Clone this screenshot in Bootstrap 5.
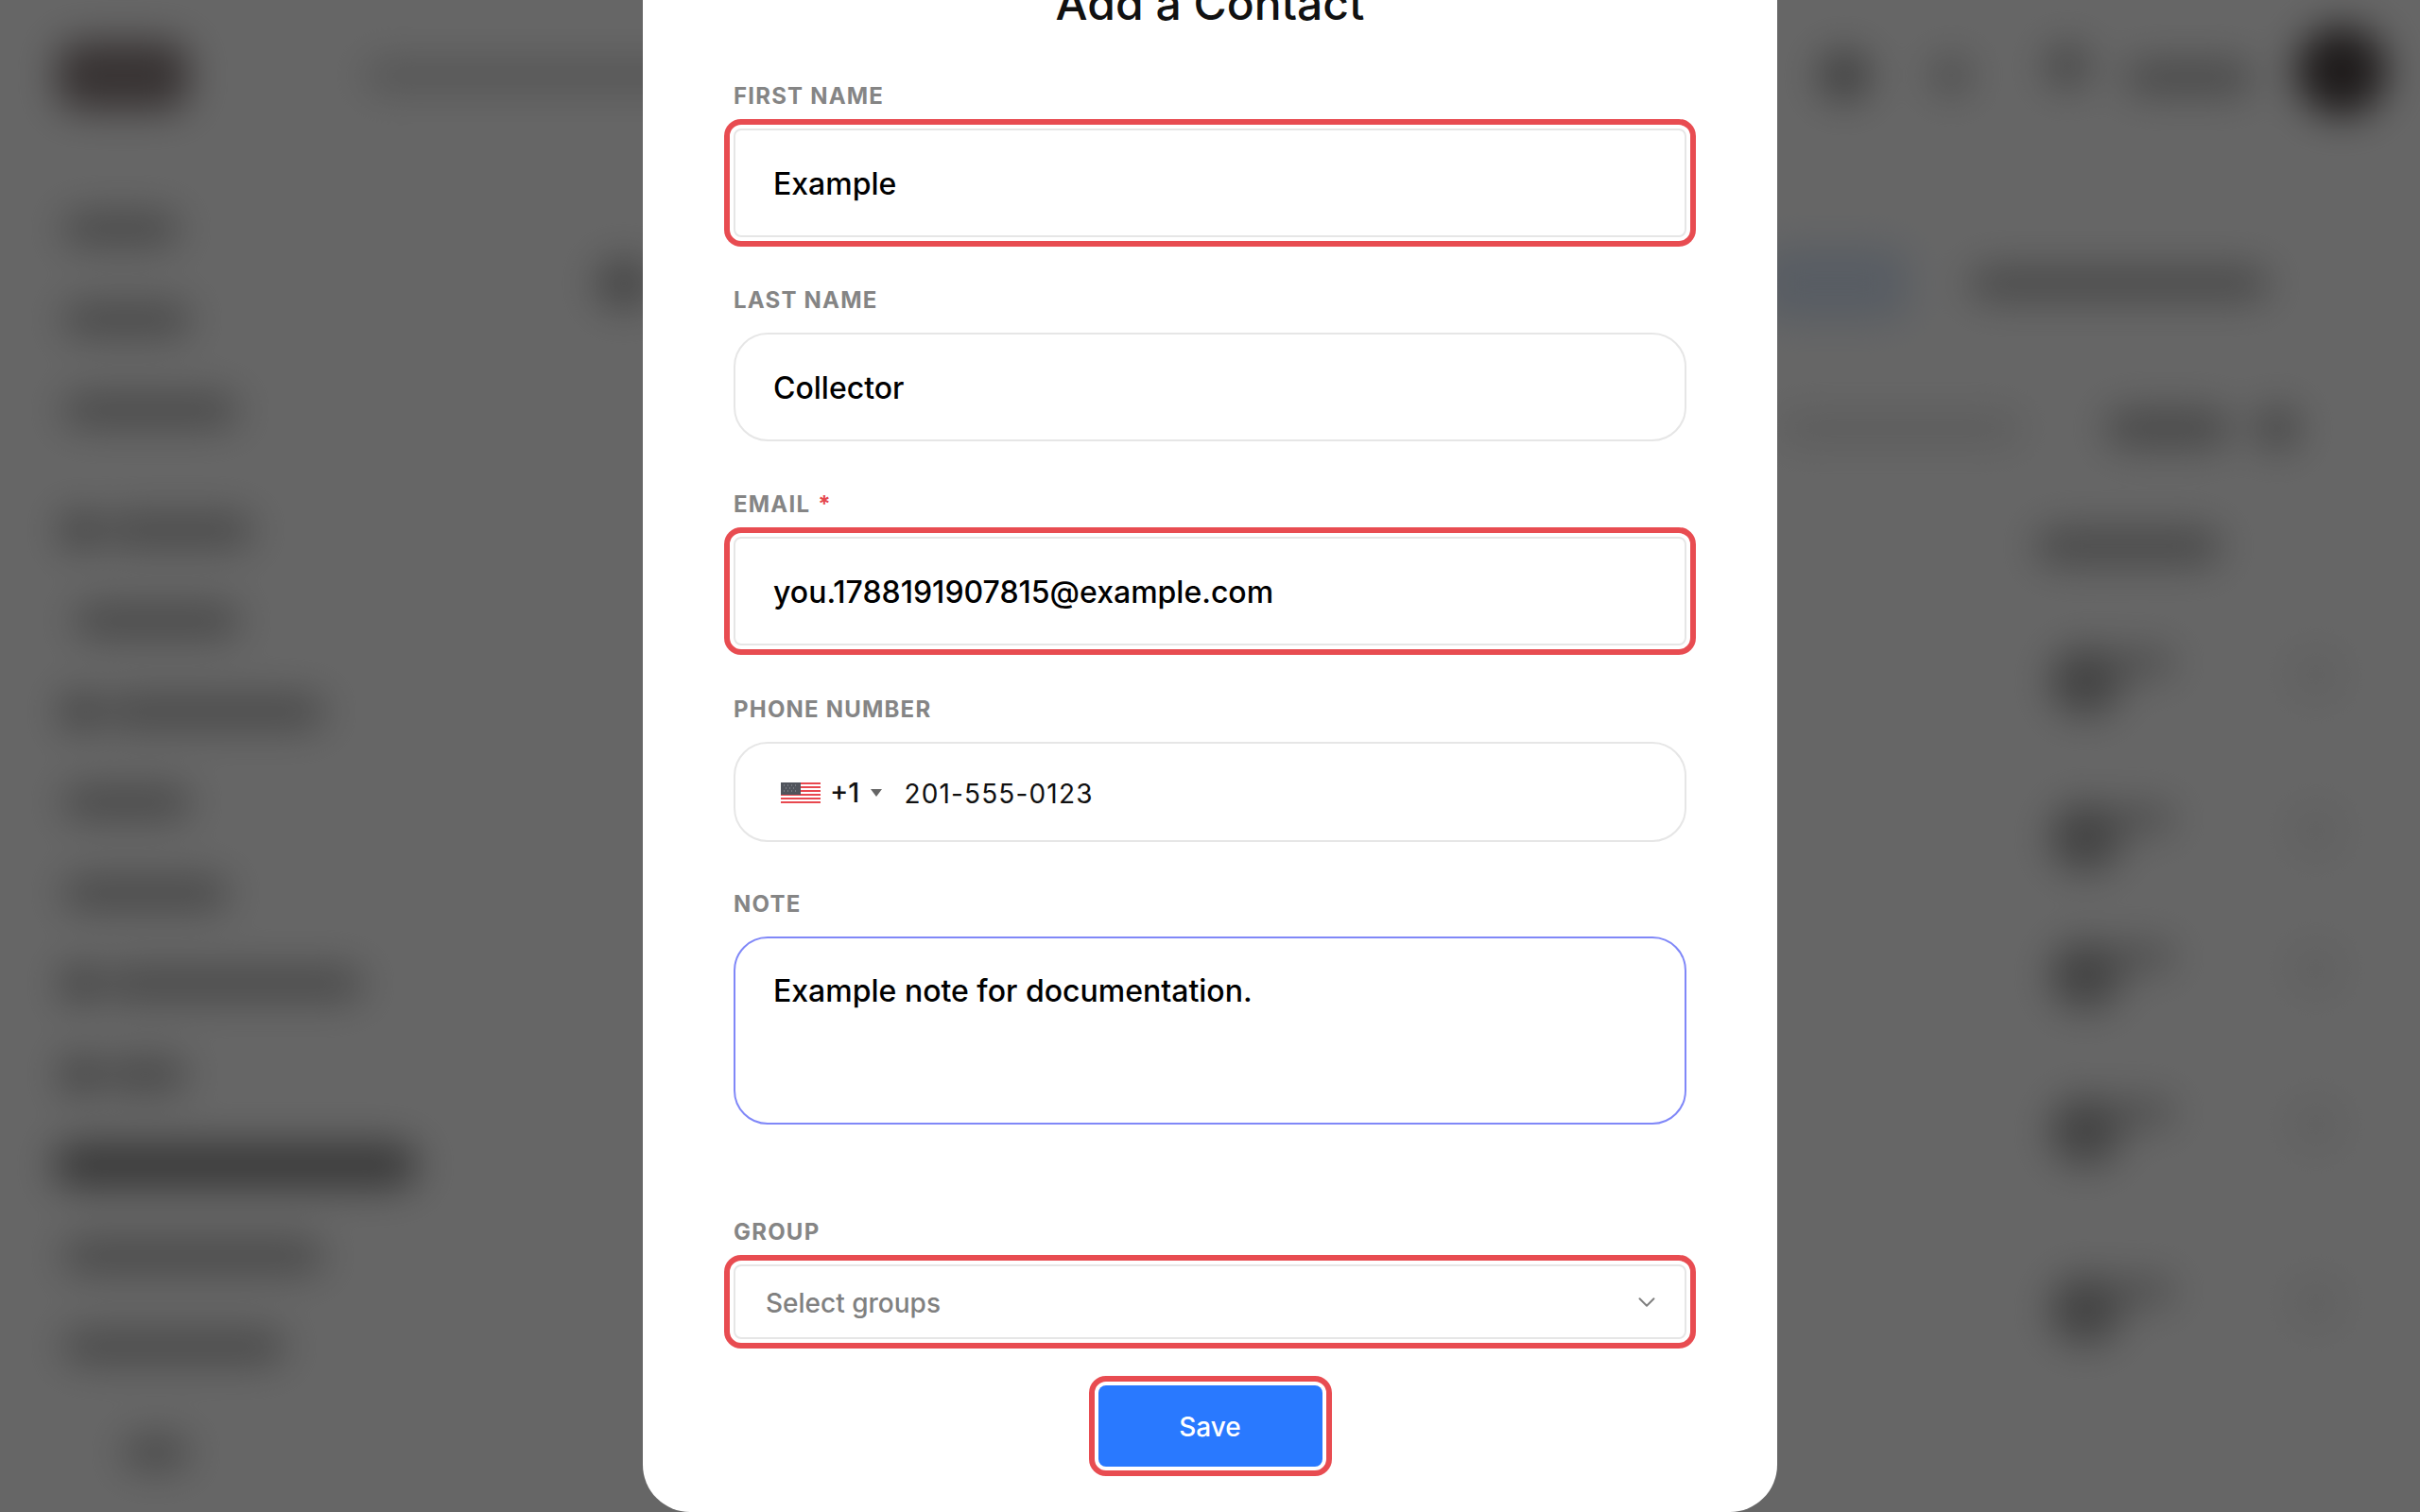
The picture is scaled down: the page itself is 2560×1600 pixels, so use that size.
<!DOCTYPE html>
<html lang="en">
<head>
<meta charset="utf-8">
<title>Add a Contact</title>
<link rel="stylesheet" href="https://cdn.jsdelivr.net/npm/bootstrap@5.3.0/dist/css/bootstrap.min.css">
<style>
html,body{height:1600px;overflow:hidden;background:#fff;font-family:"Inter","Liberation Sans",sans-serif}
.under-page{width:2560px;height:1600px;filter:blur(20px);overflow:hidden}
.blob{background:#b8b8b8;border-radius:40px;height:36px;flex:none}
.ico-blob{width:36px;height:36px;background:#a0a0a0;border-radius:8px;flex:none;margin-right:8px}
.top-strip{height:160px;padding:0 42px 0 60px}
.logo-blob{width:140px;height:74px;background:#8c8080;border-radius:24px;margin-right:186px}
.search-blob{width:1000px;height:32px;background:#d2d2d2}
.top-right{margin-left:auto;width:594px}
.rnd{border-radius:50%;flex:none}
.side-col{width:540px;padding-left:66px;height:1440px;padding-top:34px}
.side-row{height:96px;flex:none}
.row-gap{margin-top:31px}
.active-row{background:#8e8e8e;height:48px;width:386px;margin-left:-10px}
.main-col{flex:1}
.drop-row{margin-left:1628px;height:70px}
.drop-c{width:76px;height:74px;background:#a8a8a8}
.drop-arm{width:68px;height:30px;background:#c4c4c4;margin:2px 0 0 -12px;border-radius:14px;flex:none}
.drop-far{width:60px;height:60px;background:#f2f2f2;margin-left:120px}
.overlay-layer{position:fixed;inset:0;background:rgba(0,0,0,.6);overflow:hidden}
.dialog-sheet{width:1200px;background:#fff;border-radius:0 0 50px 50px;padding:0 96px 48px;flex:none}
.sheet-title{font-size:48px;font-weight:500;line-height:60px;color:#111;text-align:center;margin:0 0 53px}
.fld-label{display:block;font-size:24px;font-weight:700;letter-spacing:1.2px;line-height:30px;color:#858585;text-transform:uppercase;margin:0 0 19px}
.fld-label i{font-style:normal;color:#e5484d;margin-left:8px}
.fld-block{margin-bottom:53px}
.fld-block.fld-wide{margin-bottom:54px}
.fld-block.fld-tight{margin-bottom:52px}
.form-control.fld-input{height:115px;margin-bottom:-1px;border:2px solid #e6e6e6;border-radius:36px;padding:2px 40px 0;font-size:32px;font-weight:500;color:#000;box-shadow:none;line-height:1.5}
.marked{outline:6px solid #e84c51;outline-offset:4px;border-radius:8px!important}
.phone-box{height:106px;margin-bottom:-1px;border:2px solid #e6e6e6;border-radius:36px;padding:3px 46px 0 48px}
.flag-svg{width:42px;height:24px;flex:none;margin-right:10px}
.dial{font-size:29px;font-weight:500;color:#111;line-height:1;margin-top:-2px}
.caret-tri{width:0;height:0;border-left:6px solid transparent;border-right:6px solid transparent;border-top:8px solid #666;margin:-2px 23px 0 12px}
.phone-num{font-size:28px;letter-spacing:1.15px;color:#111;line-height:1}
.form-control.note-input{height:199px;border:2px solid #8088f8;border-radius:36px;padding:32px 40px 0;font-size:32px;font-weight:500;color:#000;resize:none;box-shadow:none}
.form-select.grp-select{height:79px;border:2px solid #e6e6e6;padding:2px 32px 0;font-size:28px;font-weight:500;color:#808080;box-shadow:none;background-position:right 27px center;background-size:26px 20px;background-image:url("data:image/svg+xml,%3csvg xmlns='http://www.w3.org/2000/svg' viewBox='0 0 16 16'%3e%3cpath fill='none' stroke='%23808080' stroke-linecap='round' stroke-linejoin='round' stroke-width='1.6' d='m2 5 6 6 6-6'/%3e%3c/svg%3e")}
.btn.save-btn{width:237px;height:86px;background:#2979ff;border:0;font-size:28px;font-weight:500;color:#fff;padding:2px 0 0}
.save-wrap{margin-top:49px}
</style>
</head>
<body>
<div class="under-page" aria-hidden="true">
  <div class="top-strip d-flex align-items-center">
    <div class="logo-blob"></div>
    <div class="blob search-blob"></div>
    <div class="top-right d-flex align-items-center">
      <div class="rnd" style="width:54px;height:54px;background:#a0a0a0"></div>
      <div class="rnd" style="width:40px;height:40px;background:#bcbcbc;margin-left:66px"></div>
      <div class="rnd" style="width:48px;height:48px;background:#b4b4b4;margin-left:79px;margin-top:-20px"></div>
      <div class="blob" style="width:135px;height:36px;margin-left:37px;margin-top:4px"></div>
      <div class="rnd" style="width:96px;height:96px;background:#4e4646;margin-left:46px;margin-top:-10px"></div>
    </div>
  </div>
  <div class="d-flex">
    <div class="side-col d-flex flex-column">
      <div class="side-row d-flex align-items-center"><div class="blob" style="width:124px"></div></div>
      <div class="side-row d-flex align-items-center"><div class="blob" style="width:136px"></div></div>
      <div class="side-row d-flex align-items-center"><div class="blob" style="width:186px"></div></div>
      <div class="side-row d-flex align-items-center row-gap"><div class="ico-blob"></div><div class="blob" style="width:158px"></div></div>
      <div class="side-row d-flex align-items-center"><div class="blob" style="width:176px;margin-left:12px"></div></div>
      <div class="side-row d-flex align-items-center"><div class="ico-blob"></div><div class="blob" style="width:234px"></div></div>
      <div class="side-row d-flex align-items-center"><div class="blob" style="width:136px"></div></div>
      <div class="side-row d-flex align-items-center"><div class="blob" style="width:176px"></div></div>
      <div class="side-row d-flex align-items-center"><div class="ico-blob"></div><div class="blob" style="width:274px"></div></div>
      <div class="side-row d-flex align-items-center"><div class="ico-blob"></div><div class="blob" style="width:88px"></div></div>
      <div class="side-row d-flex align-items-center"><div class="blob active-row"></div></div>
      <div class="side-row d-flex align-items-center"><div class="blob" style="width:276px"></div></div>
      <div class="side-row d-flex align-items-center"><div class="blob" style="width:236px"></div></div>
      <div class="side-row d-flex align-items-center mt-3"><div class="blob" style="width:70px;margin-left:64px"></div></div>
    </div>
    <div class="main-col">
      <div class="d-flex align-items-center" style="height:100px;margin-top:90px;margin-left:90px">
        <div class="blob" style="width:60px;height:54px;background:#b0b0b0"></div>
        <div class="blob" style="width:160px;height:80px;background:#dce8f8;margin-left:1170px;border-radius:24px"></div>
        <div class="blob" style="width:316px;margin-left:64px"></div>
      </div>
      <div class="d-flex align-items-center" style="height:66px;margin-top:70px;margin-left:1340px">
        <div class="blob" style="width:260px;background:#e8e8e8"></div>
        <div class="blob" style="width:133px;height:42px;margin-left:87px"></div>
        <div class="rnd" style="width:48px;height:48px;background:#b4b4b4;margin-left:25px"></div>
      </div>
      <div class="d-flex align-items-center" style="height:50px;margin-top:67px;margin-left:1613px"><div class="blob" style="width:197px;height:40px"></div></div>
      <div class="d-flex flex-column" style="margin-top:81px">
        <div class="drop-row d-flex"><div class="rnd drop-c"></div><div class="drop-arm"></div><div class="rnd drop-far"></div></div>
        <div class="drop-row d-flex" style="margin-top:95px"><div class="rnd drop-c"></div><div class="drop-arm"></div><div class="rnd drop-far"></div></div>
        <div class="drop-row d-flex" style="margin-top:76px"><div class="rnd drop-c"></div><div class="drop-arm"></div><div class="rnd drop-far"></div></div>
        <div class="drop-row d-flex" style="margin-top:95px"><div class="rnd drop-c"></div><div class="drop-arm"></div><div class="rnd drop-far"></div></div>
        <div class="drop-row d-flex" style="margin-top:119px"><div class="rnd drop-c"></div><div class="drop-arm"></div><div class="rnd drop-far"></div></div>
      </div>
    </div>
  </div>
</div>

<div class="overlay-layer d-flex justify-content-center align-items-end">
  <form class="dialog-sheet d-flex flex-column">
    <h2 class="sheet-title">Add a Contact</h2>
    <div class="fld-block">
      <label class="fld-label" for="f1">First Name</label>
      <input id="f1" class="form-control fld-input marked" value="Example">
    </div>
    <div class="fld-block">
      <label class="fld-label" for="f2">Last Name</label>
      <input id="f2" class="form-control fld-input" value="Collector">
    </div>
    <div class="fld-block fld-wide">
      <label class="fld-label" for="f3">Email<i>*</i></label>
      <input id="f3" class="form-control fld-input marked" value="you.1788191907815@example.com">
    </div>
    <div class="fld-block fld-tight">
      <div class="fld-label">Phone Number</div>
      <div class="phone-box d-flex align-items-center">
        <svg class="flag-svg" viewBox="0 0 42 24" aria-hidden="true">
          <rect width="42" height="24" fill="#fff"/>
          <path d="M0 1h42M0 5h42M0 9h42M0 13h42M0 17h42M0 21h42" stroke="#e8484f" stroke-width="2"/>
          <rect width="21" height="13" fill="#50545c"/>
          <path d="M3 3h15M5 6h12M3 9h15" stroke="#9a9da3" stroke-width="1" stroke-dasharray="1 3"/>
        </svg>
        <span class="dial">+1</span>
        <span class="caret-tri"></span>
        <span class="phone-num">201-555-0123</span>
      </div>
    </div>
    <div class="fld-block mb-0">
      <label class="fld-label" for="f5">Note</label>
      <textarea id="f5" class="form-control note-input">Example note for documentation.</textarea>
    </div>
    <div class="fld-block mb-0" style="margin-top:99px">
      <label class="fld-label" for="f6">Group</label>
      <select id="f6" class="form-select grp-select marked"><option>Select groups</option></select>
    </div>
    <div class="save-wrap d-flex justify-content-center">
      <button type="button" class="btn save-btn marked">Save</button>
    </div>
  </form>
</div>
<script src="https://cdn.jsdelivr.net/npm/bootstrap@5.3.0/dist/js/bootstrap.bundle.min.js"></script>
</body>
</html>
